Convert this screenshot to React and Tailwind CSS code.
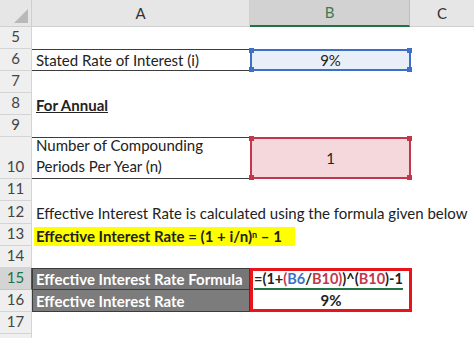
import React from 'react';

const font = { fontFamily: 'Lato, "Open Sans", sans-serif' };

function RowHead({ n, h, active }) {
    return (
        <div
            className={`w-[32px] shrink-0 flex items-end justify-center pb-[1px] border-b border-r text-[15px] ${active ? 'bg-[#d4d4d4] text-[#217346] border-r-[#217346] border-b-[#c4c4c4]' : 'bg-[#efefef] text-[#444] border-[#d4d4d4]'}`}
            style={{ height: h }}
        >
            {n}
        </div>
    );
}

function Handles({ color }) {
    const c = `absolute w-[5px] h-[5px] ${color}`;
    return (
        <>
            <span className={`${c} -left-[3px] -top-[3px]`} />
            <span className={`${c} -right-[3px] -top-[3px]`} />
            <span className={`${c} -left-[3px] -bottom-[3px]`} />
            <span className={`${c} -right-[3px] -bottom-[3px]`} />
        </>
    );
}

function App() {
    return (
        <div className="w-[474px] h-[338px] overflow-hidden bg-white text-[#222]" style={font}>
            {/* Column headers */}
            <div className="flex h-[27px]">
                <div className="w-[32px] shrink-0 bg-[#e6e6e6] border-r border-b border-[#cfcfcf] relative">
                    <svg className="absolute right-[3px] bottom-[3px]" width="14" height="14" viewBox="0 0 14 14">
                        <polygon points="14,0 14,14 0,14" fill="#b9b9b9" />
                    </svg>
                </div>
                <div className="w-[218px] shrink-0 bg-[#e6e6e6] border-r border-b border-[#cfcfcf] flex items-center justify-center text-[15px] text-[#333]">A</div>
                <div className="w-[160px] shrink-0 bg-[#d2d2d2] border-r border-[#bdbdbd] border-b-2 border-b-[#217346] flex items-center justify-center text-[15px] text-[#3f7a4f]">B</div>
                <div className="flex-1 bg-[#e6e6e6] border-b border-[#cfcfcf] flex items-center justify-center text-[15px] text-[#333]">C</div>
            </div>

            {/* Row 5 */}
            <div className="flex">
                <RowHead n="5" h={22} />
            </div>

            {/* Row 6 */}
            <div className="flex h-[22px]">
                <RowHead n="6" h={22} />
                <div className="w-[218px] shrink-0 border-y border-[#3c3c3c] flex items-end pl-[4px] text-[15px] leading-[20px]">Stated Rate of Interest (i)</div>
                <div className="w-[161px] shrink-0 relative border-2 border-[#3d6fc6] bg-[#e9eff9] flex items-center justify-center text-[15px]">
                    9%
                    <Handles color="bg-[#3d6fc6]" />
                </div>
            </div>

            {/* Row 7 */}
            <div className="flex">
                <RowHead n="7" h={22} />
            </div>

            {/* Row 8 */}
            <div className="flex h-[22px]">
                <RowHead n="8" h={22} />
                <div className="pl-[4px] flex items-end text-[15px] font-bold underline leading-[20px]">For Annual</div>
            </div>

            {/* Row 9 */}
            <div className="flex">
                <RowHead n="9" h={22} />
            </div>

            {/* Row 10 */}
            <div className="flex h-[42px]">
                <RowHead n="10" h={42} />
                <div className="w-[218px] shrink-0 border-y border-[#3c3c3c] flex items-end pl-[4px] pb-[1px] text-[15px] leading-[21px]">
                    Number of Compounding<br />Periods Per Year (n)
                </div>
                <div className="w-[161px] shrink-0 relative border-2 border-[#c4374a] bg-[#f5d8db] flex items-center justify-center text-[15px]">
                    1
                    <Handles color="bg-[#c4374a]" />
                </div>
            </div>

            {/* Row 11 */}
            <div className="flex">
                <RowHead n="11" h={22} />
            </div>

            {/* Row 12 */}
            <div className="flex h-[23px]">
                <RowHead n="12" h={23} />
                <div className="pl-[4px] flex items-end whitespace-nowrap text-[15px] leading-[21px]">
                    Effective Interest Rate is calculated using the formula given below
                </div>
            </div>

            {/* Row 13 */}
            <div className="flex h-[22px]">
                <RowHead n="13" h={22} />
                <div className="ml-[2px] mt-[3px] w-[261px] bg-[#ffff00] pl-[2px] flex items-end whitespace-nowrap text-[15px] font-bold leading-[19px]">
                    <span>
                        Effective Interest Rate = (1 + i/n)<sup className="text-[9px]">n</sup> – 1
                    </span>
                </div>
            </div>

            {/* Row 14 */}
            <div className="flex">
                <RowHead n="14" h={22} />
            </div>

            {/* Row 15 */}
            <div className="flex h-[22px]">
                <RowHead n="15" h={22} active />
                <div className="w-[218px] shrink-0 bg-[#767676] border border-[#3c3c3c] flex items-end pl-[3px] text-[15px] font-bold text-white leading-[20px] whitespace-nowrap overflow-hidden">
                    Effective Interest Rate Formula
                </div>
                <div className="w-[162px] shrink-0 border-[3px] border-b-0 border-[#e8131b] flex items-end pl-[1px] text-[14.5px] font-bold leading-[18px] whitespace-nowrap">
                    <span className="border-b-2 border-[#217346]">
                        =(1+<span className="text-[#c4374a]">(</span><span className="text-[#3d6fc6]">B6</span>/<span className="text-[#c4374a]">B10</span><span className="text-[#c4374a]">)</span>)^(<span className="text-[#c4374a]">B10</span>)-1
                    </span>
                </div>
            </div>

            {/* Row 16 */}
            <div className="flex h-[22px]">
                <RowHead n="16" h={22} />
                <div className="w-[218px] shrink-0 bg-[#7c7c7c] border border-t-0 border-[#3c3c3c] flex items-end pl-[3px] text-[15px] font-bold text-white leading-[20px]">
                    Effective Interest Rate
                </div>
                <div className="w-[162px] shrink-0 border-[3px] border-t-0 border-[#e8131b] flex items-end justify-center text-[15px] font-bold leading-[18px]">
                    9%
                </div>
            </div>

            {/* Row 17 */}
            <div className="flex">
                <RowHead n="17" h={22} />
            </div>
            <div className="flex">
                <RowHead n="" h={22} />
            </div>
        </div>
    );
}

export default App;
